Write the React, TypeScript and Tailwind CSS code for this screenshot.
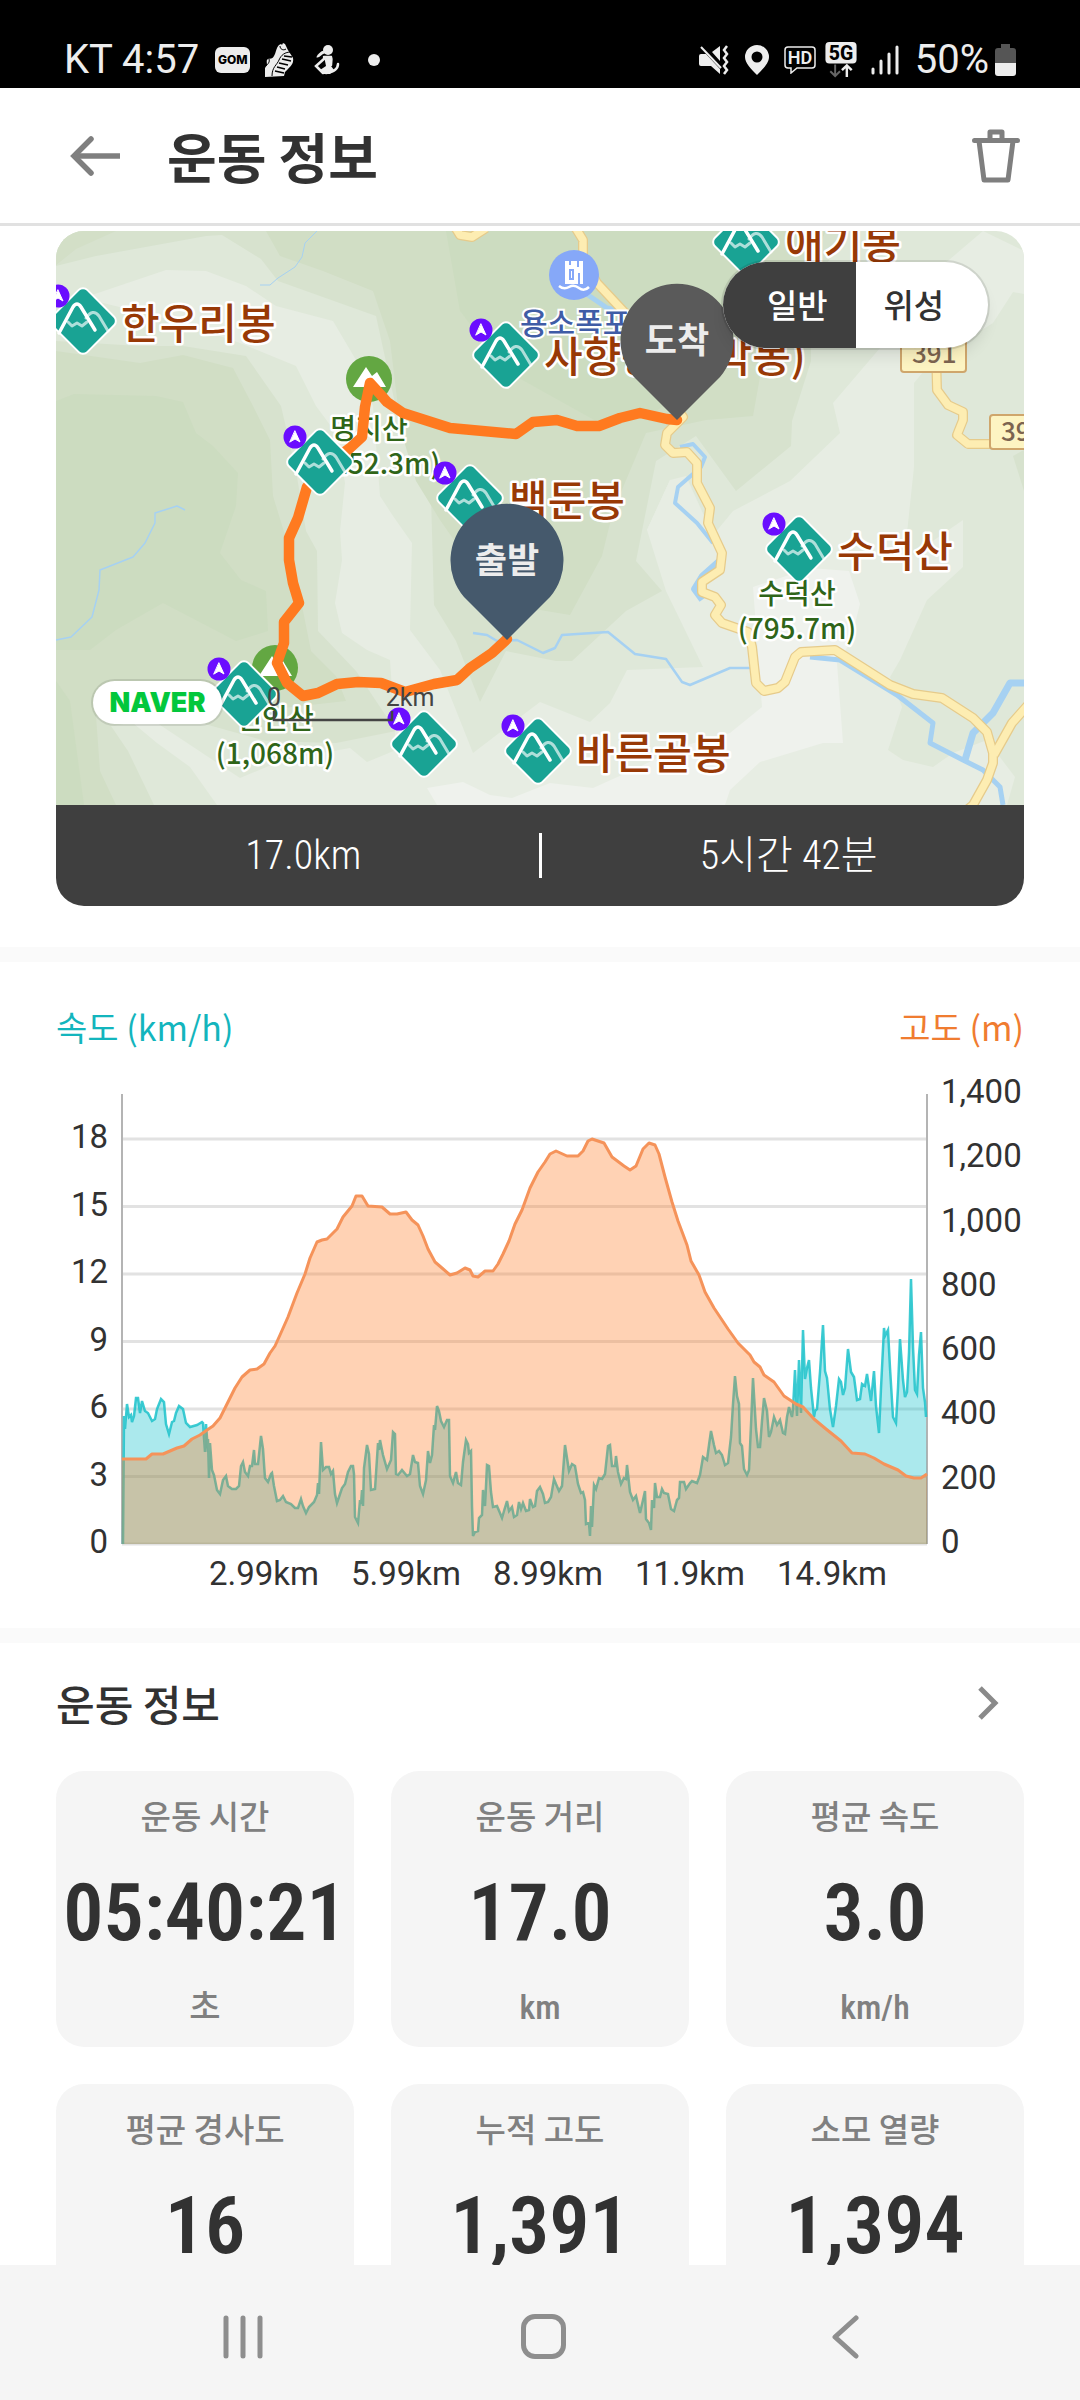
import type { ReactNode } from "react";

type Point = [number, number];

const KR = "font-['Noto_Sans_CJK_KR',sans-serif]";
const ROBOTO = "font-['Roboto','Noto_Sans_CJK_KR',sans-serif]";
const NARROW = "font-['Roboto_Condensed','Liberation_Sans_Narrow','Roboto','Noto_Sans_CJK_KR',sans-serif]";

const stats = [
    { label: "운동 시간", value: "05:40:21", unit: "초" },
    { label: "운동 거리", value: "17.0", unit: "km" },
    { label: "평균 속도", value: "3.0", unit: "km/h" },
    { label: "평균 경사도", value: "16" },
    { label: "누적 고도", value: "1,391" },
    { label: "소모 열량", value: "1,394" },
];

const peaks: { at: Point; name?: string; nameAt?: Point }[] = [
    { at: [27, 90], name: "한우리봉", nameAt: [65, 108] },
    { at: [264, 231] },
    { at: [450, 124], name: "사향봉(소막봉)", nameAt: [488, 141] },
    { at: [414, 267], name: "백둔봉", nameAt: [453, 285] },
    { at: [690, 11], name: "애기봉", nameAt: [729, 28] },
    { at: [743, 318], name: "수덕산", nameAt: [781, 336] },
    { at: [188, 463] },
    { at: [368, 513] },
    { at: [482, 520], name: "바른골봉", nameAt: [520, 538] },
];

const summits: { at: Point; name: string; height: string }[] = [
    { at: [313, 208], name: "명지산", height: "(1,252.3m)" },
    { at: [741, 373], name: "수덕산", height: "(795.7m)" },
    { at: [219, 498], name: "연인산", height: "(1,068m)" },
];

const roads = [
    "M519,-4 L527,9 L527,26 L541,52 L571,84 L600,150 L627,186 L611,202 L609,214 L617,222 L631,221 L641,232 L641,252 L654,277 L652,292 L666,322 L664,339 L646,351 L646,361 L659,366 L665,374 L659,384 L666,392 L692,401 L696,416 L700,452 L708,460 L722,457 L729,451 L739,426 L745,421 L779,419 L834,454 L857,463 L886,467 L917,487 L931,501 L937,522 L937,532 L931,549 L917,574 L900,588",
    "M972,474 L956,492 L938,524",
    "M880,120 L881,159 L892,174 L907,181 L907,189 L901,204 L912,213 L940,213",
    "M399,-4 L404,4 L416,6 L430,-3",
];

const rivers = [
    { d: "M261,0 L249,12 L246,26 L239,36 L222,47 L214,54 L204,54", w: 1 },
    { d: "M129,279 L121,275 L99,282 L99,292 L89,312 L77,326 L44,339 L43,359 L36,386 L15,406 L0,409", w: 1.5 },
    { d: "M528,20 L532,64 L551,77 L575,82", w: 5 },
    { d: "M624,216 L637,213 L649,226 L645,236 L622,256 L619,272 L641,292 L657,312", w: 4 },
    { d: "M664,329 L646,345 L638,358 L646,369", w: 6 },
    { d: "M417,402 L431,404 L441,410 L461,409 L487,422 L499,417 L506,404 L552,401 L579,423 L610,428 L626,451 L634,454 L674,437 L694,437", w: 2.5 },
    { d: "M754,426 L784,429 L841,464 L877,492 L874,512 L907,529 L927,539 L944,556 L947,574", w: 5 },
    { d: "M968,452 L954,452 L937,482 L917,502 L909,529", w: 7 },
];

const terrain = [
    // light valleys
    { fill: "#e7ede3", d: "M27,67 L110,39 L150,40 L190,55 L220,75 L277,90 L300,129 L317,175 L324,265 L337,285 L356,312 L354,399 L384,439 L417,522 L484,471 L534,491 L554,472 L571,439 L647,436 L610,360 L591,299 L614,249 L644,320 L677,280 L734,250 L784,202 L777,172 L830,110 L880,40 L927,0 L968,20 L968,63 L957,61 L937,92 L877,129 L858,152 L858,236 L848,330 L907,289 L907,336 L871,369 L844,429 L834,446 L846,476 L832,519 L847,529 L877,536 L897,522 L931,509 L959,546 L951,574 L161,574 L134,536 L101,512 L77,492 L92,486 L184,547 L227,529 L294,517 L311,531 L340,519 L334,429 L311,419 L286,402 L279,372 L286,329 L284,300 L289,252 L280,202 L260,175 L240,135 L184,112 L120,90 Z" },
    { fill: "#d7e2ce", d: "M0,35 L40,25 L150,5 L166,4 L205,28 L222,50 L250,60 L320,85 L345,200 L375,265 L378,374 L400,410 L424,471 L450,420 L500,430 L516,430 L570,380 L606,360 L580,330 L600,230 L640,205 L680,260 L735,215 L736,190 L755,130 L755,60 L790,0 L0,0 Z" },
    { fill: "#d3dfc7", d: "M0,0 L60,0 L20,18 L0,34 Z" },
    { fill: "#d1dec5", d: "M210,0 L224,25 L267,40 L317,60 L334,110 L345,200 L360,250 L384,289 L407,322 L440,390 L484,379 L514,384 L546,325 L557,280 L590,202 L650,189 L697,185 L705,140 L744,100 L744,56 L770,0 Z" },
    { fill: "#ccdcc0", d: "M390,0 L404,80 L450,140 L540,190 L600,180 L690,120 L712,60 L700,0 Z" },
    { fill: "#d7e2ce", d: "M0,110 L84,115 L127,115 L190,125 L225,175 L240,240 L250,300 L261,320 L262,400 L300,440 L340,500 L280,512 L210,510 L120,485 L55,495 L72,520 L98,574 L0,574 Z" },
    { fill: "#d1dec5", d: "M0,120 L84,132 L127,124 L177,137 L197,175 L214,209 L217,265 L237,330 L255,420 L280,445 L290,470 L200,480 L90,465 L40,485 L44,540 L60,574 L0,574 Z" },
    { fill: "#ccdcc0", d: "M0,170 L18,163 L100,165 L127,171 L140,202 L157,215 L182,242 L180,275 L164,322 L185,349 L210,360 L212,400 L180,410 L107,372 L60,399 L34,419 L0,419 Z" },
    { fill: "#ccdcc0", d: "M0,450 L14,470 L28,574 L0,574 Z" },
    // plains
    { fill: "#eff2ed", d: "M697,356 L754,337 L793,340 L804,373 L794,412 L781,432 L787,512 L767,512 L704,531 L674,559 L669,574 L381,574 L371,557 L407,551 L434,564 L456,567 L494,552 L537,557 L577,539 L624,516 L674,502 L706,476 Z" },
    { fill: "#e7ede3", d: "M591,299 L614,249 L630,245 L655,300 L660,330 L640,350 Z" },
    { fill: "#d7e2ce", d: "M957,225 L968,219 L968,260 Z" },
];

const track =
    "M451,408 L436,422 L414,437 L401,449 L378,453 L349,461 L325,452 L302,451 L281,453 L262,462 L247,465 L231,452 L221,432 L228,412 L228,391 L243,372 L237,352 L233,329 L233,307 L242,287 L251,256 L270,235 L294,217 L306,206 L309,176 L314,152 L324,163 L331,171 L347,182 L394,197 L460,203 L477,191 L501,189 L521,195 L543,195 L564,187 L584,182 L611,188 L621,189";

const altitude =
    "66,395 90,395 96,390 107,390 121,384 128,382 136,375 144,371 151,366 157,362 164,354 171,340 179,324 186,313 194,306 201,305 208,300 214,289 219,282 224,271 232,253 241,229 249,210 254,194 261,178 266,176 271,175 281,165 287,153 296,142 300,132 306,132 312,142 326,143 334,150 341,150 350,148 356,156 362,161 367,172 372,185 379,198 386,204 394,211 401,209 409,204 414,206 417,212 422,213 429,207 437,207 442,200 447,190 453,177 459,160 466,146 474,124 482,108 489,98 494,90 500,87 511,92 522,92 527,87 532,77 536,75 548,79 556,93 568,102 574,106 580,102 587,85 593,79 599,81 603,90 609,113 616,138 622,157 631,181 635,197 643,211 649,228 658,244 672,265 682,279 694,291 698,298 704,303 708,311 718,318 728,332 740,340 747,343 758,355 770,365 785,377 796,389 809,390 818,394 828,400 842,406 850,412 858,414 865,414 871,410";

const speed =
    "67,480 68,352 69,365 71,340 73,353 75,351 76,358 78,352 80,334 82,334 84,349 86,337 89,347 92,349 96,357 99,355 101,345 105,335 108,338 110,360 113,370 116,358 118,357 120,349 123,342 127,345 130,359 134,363 141,361 146,358 147,359 149,388 150,360 152,388 152,375 153,414 154,379 156,406 158,411 161,426 164,430 167,416 170,412 172,422 176,425 180,425 183,422 185,402 187,398 189,408 192,412 194,402 196,402 198,386 199,400 202,400 205,372 207,385 209,414 212,418 215,410 216,409 218,422 221,437 224,436 227,432 230,438 235,440 239,444 242,444 245,435 247,442 250,449 253,443 258,438 261,431 262,419 263,430 265,378 267,406 270,403 273,403 275,410 277,407 279,430 281,439 284,430 286,424 289,420 292,408 295,402 297,402 298,410 299,453 302,459 304,436 305,440 306,426 307,442 308,404 311,381 313,390 315,426 319,425 322,379 323,386 324,376 327,391 331,405 335,396 337,368 339,370 340,410 342,411 346,406 351,412 354,410 357,391 359,398 362,399 364,422 367,430 370,416 372,387 374,399 376,391 378,361 379,366 381,342 383,347 385,357 388,363 391,356 393,356 394,412 397,419 400,408 402,419 405,421 407,398 410,376 412,380 413,389 415,387 416,442 417,472 419,468 422,467 423,454 426,451 427,426 429,442 430,422 431,401 433,402 435,428 437,443 441,442 444,449 446,454 448,447 451,437 453,447 456,443 458,453 461,451 463,438 465,445 467,439 470,447 473,446 474,435 477,443 479,442 481,427 484,423 487,430 489,439 492,438 495,433 498,415 500,420 503,427 506,422 509,381 513,407 516,400 519,402 522,420 525,429 527,428 529,436 530,460 533,459 534,472 535,442 536,463 538,421 540,425 543,414 546,415 549,410 552,382 554,381 556,402 559,402 560,392 562,408 565,420 568,414 570,415 571,401 574,428 577,436 580,432 584,449 587,436 589,427 590,455 593,459 595,466 596,436 598,444 599,419 601,433 604,433 606,425 608,429 612,430 615,445 618,447 621,436 623,434 624,418 628,418 630,425 634,419 636,417 641,419 644,411 647,393 651,396 653,381 655,367 658,381 660,389 663,387 666,391 669,401 672,399 675,373 677,340 679,312 681,332 683,340 684,379 686,382 688,405 691,411 693,406 695,361 697,314 700,365 702,383 704,383 706,357 708,334 711,347 713,373 715,368 718,353 721,361 724,356 727,369 729,370 731,353 733,343 736,353 737,345 739,306 741,352 743,296 745,349 747,266 749,315 751,304 753,296 755,324 758,353 759,347 761,345 764,308 767,261 769,307 771,314 774,345 777,363 780,342 783,315 785,318 787,331 789,324 792,285 795,308 798,313 801,336 804,335 806,320 809,322 811,310 815,337 818,307 820,342 823,369 825,324 828,264 829,272 832,266 834,304 837,353 840,359 842,324 844,275 847,316 849,333 851,328 853,289 855,215 857,283 859,326 861,330 863,291 865,268 867,324 869,338 870,353";

function StatusBar() {
    return (
        <div className={`${ROBOTO} flex h-[88px] shrink-0 items-center justify-between bg-black pt-8 pr-16 pl-16 text-[40px] leading-none text-[#ededed]`}>
            <div className="flex items-center">
                <span>KT 4:57</span>
                <span className="ml-4 flex h-[26px] w-[35px] items-center justify-center rounded-md bg-[#ededed] font-['Inter'] text-[12px] font-extrabold text-black">
                    GOM
                </span>
                {/* running shoe */}
                <svg className="ml-[14px] h-9 w-[30px]" viewBox="0 0 30 36" fill="none">
                    <path d="M1 35V26l2-3c0-3-1-5 1-6s4 1 6-3c2-3 2-8 5-11l2-1 1 1 1-2 2 1 1 2c2 5 5 8 7 12 1 5-2 8-5 11l-3 3-1 4z" fill="#ededed" />
                    <path d="M8 34C8 25 13 23 15 18s6-8 12-8" stroke="#000" strokeWidth="1" />
                    <path d="M11 29l9 2M13 25l8 2M15 21l9 2M18 17l9 2M20 14l8 1" stroke="#000" strokeWidth="1.5" />
                    <path d="M5 17c1 3-1 5-3 7M16 4c0 3 3 5 6 3" stroke="#000" strokeWidth="1" />
                </svg>
                {/* person stretching */}
                <svg className="ml-5 h-[30px] w-[26px]" viewBox="0 0 26 30" fill="none">
                    <circle cx="14" cy="5" r="5" fill="#ededed" />
                    <path d="M10 7C6 8 5 12 3 11" stroke="#ededed" strokeWidth="3" />
                    <path d="M10 12h7c1 2 0 5 0 8M11 13L2 21l7 7M24 19c0 5-5 8-12 9" stroke="#ededed" strokeWidth="2.5" strokeLinecap="round" />
                    <path d="M10 11h7v10l3 4-4 4H9l-3-4 6-4z" fill="#ededed" />
                </svg>
                <span className="ml-7 size-3 rounded-full bg-[#ededed]" />
            </div>
            <div className="flex items-center">
                {/* muted with vibration */}
                <svg className="h-[30px] w-[30px]" viewBox="0 0 30 30" fill="none">
                    <path d="M0 11q0-2 2-2h5l14 15v5l-9-8H2q-2 0-2-2zM13 7l8-6v15z" fill="#ededed" />
                    <path d="M2 2l20 21" stroke="#ededed" strokeWidth="2" />
                    <path d="M28 1l-3 4 3 4-3 4 3 4-3 4 3 4-3 4" stroke="#ededed" strokeWidth="2.5" />
                </svg>
                <svg className="ml-4 h-[30px] w-6" viewBox="0 0 24 30">
                    <path fillRule="evenodd" d="M12 0a12 12 0 0 1 12 12c0 6-6 12-12 18C6 24 0 18 0 12A12 12 0 0 1 12 0zm0 6.500a5.500 5.500 0 1 0 0 11 5.500 5.500 0 0 0 0-11z" fill="#ededed" />
                </svg>
                <svg className="ml-[15px] h-7 w-8" viewBox="0 0 32 28">
                    <path d="M4 1h24q3 0 3 3v15q0 3-3 3H13l-6 5v-5H4q-3 0-3-3V4q0-3 3-3z" fill="none" stroke="#ededed" strokeWidth="1.500" />
                    <text x="16" y="18" textAnchor="middle" fontSize="18" fontWeight="600" fill="#ededed">HD</text>
                </svg>
                <svg className="ml-[9px] h-9 w-8" viewBox="0 0 32 37">
                    <rect width="32" height="22" rx="4" fill="#ededed" />
                    <text x="16" y="18" textAnchor="middle" fontSize="20" fontWeight="800" fill="#000">5G</text>
                    <path d="M10 23v12M5 30l5 5 5-5" fill="none" stroke="#666" strokeWidth="2" />
                    <path d="M22 36V24M17 29l5-5 5 5" fill="none" stroke="#ededed" strokeWidth="2.500" />
                </svg>
                <svg className="ml-[14px] h-[30px] w-7" viewBox="0 0 28 30" stroke="#ededed" strokeWidth="3" strokeLinecap="round">
                    <path d="M2 24v4M10 16v12M18 9v19M26 2v26" />
                </svg>
                <span className="ml-4">50%</span>
                <svg className="ml-[6px] h-8 w-[21px]" viewBox="0 0 21 32">
                    <path d="M6 0h9v4h3q3 0 3 3v12H0V7q0-3 3-3h3z" fill="#555" />
                    <path d="M0 19h21v10q0 3-3 3H3q-3 0-3-3z" fill="#ededed" />
                </svg>
            </div>
        </div>
    );
}

function Header() {
    return (
        <header className="flex h-[138px] shrink-0 items-center border-b-[3px] border-[#e1e1e1] bg-white pr-[60px] pl-[70px]">
            <button type="button" aria-label="뒤로">
                <svg className="h-10 w-[51px]" viewBox="0 0 51 40" fill="none" stroke="#7f7f7f" strokeWidth="5.500" strokeLinecap="round">
                    <path d="M21 3L4 20l17 17" />
                    <path d="M4 20h46" strokeLinecap="butt" />
                </svg>
            </button>
            <h1 className="ml-[46px] flex-1 text-[54px] leading-none font-bold">운동 정보</h1>
            <button type="button" aria-label="삭제">
                <svg className="h-[54px] w-12" viewBox="0 0 48 54" fill="none" stroke="#7f7f7f" strokeWidth="5" strokeLinecap="round" strokeLinejoin="round">
                    <path d="M2.500 11.500h43M18 11V3h12v8M7 12l5 39h24l5-39" />
                </svg>
            </button>
        </header>
    );
}

function PeakMarker({ at }: { at: Point }) {
    return (
        <g transform={`translate(${at[0]} ${at[1]})`} fill="none" strokeLinejoin="round" strokeLinecap="round">
            <rect x="-25" y="-25" width="50" height="50" rx="6" transform="rotate(45)" fill="#19a394" stroke="#fff" strokeWidth="2" />
            <path d="M-15,1 L-11,5 L-6,2 L-1,5 L4,1 M3,-3 Q10,-13 16,-5 L25,10" stroke="#fff" strokeOpacity=".65" strokeWidth="3" />
            <path d="M-24,12 L-10,-14 Q-6,-20 -2,-14 L12,9" stroke="#fff" strokeWidth="3.500" />
            <g transform="translate(-25 -25)">
                <circle r="11.500" fill="#6a0dff" />
                <path d="M0,-6 L5,5 L0,2 L-5,5 Z" fill="#fff" stroke="#fff" />
            </g>
        </g>
    );
}

function SummitBadge({ at }: { at: Point }) {
    return (
        <g transform={`translate(${at[0]} ${at[1]})`}>
            <circle r="23" fill="#63a742" />
            <path d="M-16,8 L-3,-12 L3,-3 L8,-7 L17,8 Z" fill="#fff" />
        </g>
    );
}

function Pin({ at, color, label }: { at: Point; color: string; label: string }) {
    return (
        <g transform={`translate(${at[0]} ${at[1]})`}>
            <path d="M0,80 L-43,37 A56.500,56.500 0 1 1 43,37 Z" fill={color} />
            <text y="13" textAnchor="middle" fontSize="35" fontWeight="700" fill="#ececec">{label}</text>
        </g>
    );
}

function RouteMap() {
    return (
        <div className="relative h-[574px] bg-[#dfe8d9]">
            <svg className={`${KR} size-full`} viewBox="0 0 968 574" preserveAspectRatio="xMidYMid slice">
                {terrain.map((t, i) => (
                    <path key={i} d={t.d} fill={t.fill} />
                ))}
                {rivers.map((r) => (
                    <path key={r.d} d={r.d} fill="none" stroke="#a6d1f2" strokeWidth={r.w} strokeLinejoin="round" />
                ))}
                <g fill="none" strokeLinejoin="round">
                    {roads.map((d) => (
                        <path key={d} d={d} stroke="#e6cb8b" strokeWidth="10" />
                    ))}
                    {roads.map((d) => (
                        <path key={d} d={d} stroke="#fdedb2" strokeWidth="7.500" />
                    ))}
                </g>
                <g fill="#fdf4c2" stroke="#cfa66c" strokeWidth="2">
                    <rect x="845" y="107" width="65" height="34" rx="3" />
                    <rect x="934" y="184" width="65" height="34" rx="3" />
                </g>
                <g fill="#7c6450" fontSize="26" fontWeight="500">
                    <text x="856" y="132">391</text>
                    <text x="945" y="210">391</text>
                </g>

                <SummitBadge at={[313, 148]} />
                <SummitBadge at={[219, 437]} />
                {/* waterfall */}
                <circle cx="518" cy="44" r="25" fill="#86a8f8" />
                <path d="M509,30h18v23h-18z" fill="#fff" />
                <path d="M514,30v4M522,30v6M514,39v9h3v-9zM523,42v11" fill="none" stroke="#86a8f8" strokeWidth="2" />
                <path d="M503,55q5,4 10,1t10,1t10,-1" fill="none" stroke="#fff" strokeWidth="2.500" />
                <text x="464" y="103" fontSize="30" fontWeight="500" fill="#3f5ca6" stroke="#fff" strokeWidth="4" paintOrder="stroke">용소폭포</text>

                <g fill="#2f6519" stroke="#fff" strokeWidth="5" strokeLinejoin="round" fontSize="28" fontWeight="500" textAnchor="middle" paintOrder="stroke">
                    {summits.map((s) => (
                        <text key={s.height} x={s.at[0]} y={s.at[1]}>
                            <tspan>{s.name}</tspan>
                            <tspan x={s.at[0]} dy="35">{s.height}</tspan>
                        </text>
                    ))}
                </g>

                <path d={track} fill="none" stroke="#ff7a20" strokeWidth="10.500" strokeLinejoin="round" strokeLinecap="round" />

                <g fill="#983906" stroke="#fff" strokeWidth="5" strokeLinejoin="round" fontSize="42" fontWeight="500" paintOrder="stroke">
                    {peaks.map((p) => p.nameAt && (
                        <text key={p.name} x={p.nameAt[0]} y={p.nameAt[1]}>{p.name}</text>
                    ))}
                </g>
                {peaks.map((p) => (
                    <PeakMarker key={p.at[0]} at={p.at} />
                ))}

                {/* scale */}
                <path d="M218,480v9h118v-9" fill="none" stroke="#444" strokeWidth="2.500" />
                <g className={ROBOTO} fill="#444" fontSize="25" textAnchor="middle">
                    <text x="218" y="475">0</text>
                    <text x="354" y="475">2km</text>
                </g>

                <Pin at={[451, 329]} color="#45596c" label="출발" />
                <Pin at={[621, 109]} color="#5a5a5a" label="도착" />
            </svg>

            <div className="absolute bottom-[81px] left-[37px] flex h-[43px] w-[129px] items-center justify-center rounded-full bg-white font-['Inter'] text-[27px] leading-none font-black text-[#03c73c] ring-2 ring-black/10">
                NAVER
            </div>
            <div className="absolute top-[31px] right-9 flex h-[86px] w-[265px] overflow-hidden rounded-full bg-white text-[33px] font-medium shadow-lg ring-2 ring-black/10">
                <button type="button" aria-pressed="true" className="flex-1 bg-[#3f3f3f] pl-4 text-white">일반</button>
                <button type="button" aria-pressed="false" className="flex-1 pr-4">위성</button>
            </div>
        </div>
    );
}

function SpeedChart() {
    return (
        <svg className={`${ROBOTO} mt-[15px] w-full`} viewBox="0 0 968 540" role="img" aria-label="속도와 고도">
            <g stroke="#e2e2e2" strokeWidth="3">
                {[0, 1, 2, 3, 4, 5, 6].map((i) => (
                    <line key={i} x1="66" x2="871" y1={480 - i * 67.5} y2={480 - i * 67.5} />
                ))}
            </g>
            <path d="M66,30V480M871,30V480" stroke="#b4b4b4" strokeWidth="2" />
            <polygon points={`66,480 ${speed} 871,480`} fill="#00bdc7" fillOpacity=".33" />
            <polyline points={speed} fill="none" stroke="#1cc2ca" strokeOpacity=".85" strokeWidth="2.500" />
            <polygon points={`66,480 ${altitude} 871,480`} fill="#ff7b22" fillOpacity=".34" />
            <polyline points={altitude} fill="none" stroke="#f5935a" strokeWidth="3" strokeLinejoin="round" />
            <g fill="#323232" fontSize="33">
                {[0, 3, 6, 9, 12, 15, 18].map((v) => (
                    <text key={v} x="52" y={489 - v * 22.5} textAnchor="end">{v}</text>
                ))}
                {[0, 200, 400, 600, 800, 1000, 1200, 1400].map((v) => (
                    <text key={v} x="885" y={489 - (v * 450) / 1400}>{v.toLocaleString("en-US")}</text>
                ))}
                {["2.99km", "5.99km", "8.99km", "11.9km", "14.9km"].map((v, i) => (
                    <text key={v} x={208 + i * 142} y="521" textAnchor="middle">{v}</text>
                ))}
            </g>
        </svg>
    );
}

function StatCard({ label, value, unit }: { label: string; value: string; unit?: ReactNode }) {
    return (
        <div className="flex h-[276px] flex-col items-center rounded-[28px] bg-[#f5f5f5] pt-[22px]">
            <dt className="text-[33px] leading-[44px] font-medium text-[#808080]">{label}</dt>
            <dd className={`${NARROW} mt-7 text-[80px] leading-[96px] font-semibold`}>{value}</dd>
            {unit && <dd className={`${NARROW} mt-6 text-[34px] leading-[44px] font-medium text-[#808080]`}>{unit}</dd>}
        </div>
    );
}

function NavBar() {
    return (
        <nav className="grid h-[135px] shrink-0 grid-cols-3 place-items-center bg-[#f5f5f5] pt-2 pr-[84px] pl-[92px]">
            <button type="button" aria-label="최근 앱">
                <svg className="size-11" viewBox="0 0 44 44" stroke="#8e8e8e" strokeWidth="5" strokeLinecap="round">
                    <path d="M5 3v38M22 3v38M39 3v38" />
                </svg>
            </button>
            <button type="button" aria-label="홈" className="size-[45px] rounded-[14px] border-[5px] border-[#8e8e8e]" />
            <button type="button" aria-label="이전">
                <svg className="size-11" viewBox="0 0 44 44" fill="none" stroke="#8e8e8e" strokeWidth="5" strokeLinecap="round" strokeLinejoin="round">
                    <path d="M33 3L12 22l21 19" />
                </svg>
            </button>
        </nav>
    );
}

export default function App() {
    return (
        <div className={`${KR} flex h-screen flex-col bg-white text-[#323232]`}>
            <StatusBar />
            <Header />

            <main className="min-h-0 flex-1 overflow-hidden">
                <section className="px-14 pt-[5px] pb-[41px]">
                    <div className="overflow-hidden rounded-[28px]">
                        <RouteMap />
                        <div className={`${NARROW} flex h-[101px] items-center bg-[#3f3f3f] text-center text-[40px] font-light text-white`}>
                            <span className="flex-1 pl-3">17.0km</span>
                            <span className="h-[45px] w-[3px] bg-white" />
                            <span className="flex-1 pl-3">5시간 42분</span>
                        </div>
                    </div>
                </section>

                <section className="border-t-[15px] border-[#fafafa] px-14 pt-[43px] pb-6">
                    <div className="flex justify-between text-[34px] leading-[44px]">
                        <span className="text-[#13b5bd]">속도 (km/h)</span>
                        <span className="text-[#f07c30]">고도 (m)</span>
                    </div>
                    <SpeedChart />
                </section>

                <section className="border-t-[15px] border-[#fafafa] px-14 pt-9">
                    <div className="flex items-center justify-between pr-6">
                        <h2 className="text-[42px] leading-[48px] font-medium">운동 정보</h2>
                        <button type="button" aria-label="더보기">
                            <svg className="h-9 w-6" viewBox="0 0 24 36" fill="none" stroke="#8a8a8a" strokeWidth="5">
                                <path d="M4 3l15 15L4 33" />
                            </svg>
                        </button>
                    </div>
                    <dl className="mt-11 grid grid-cols-3 gap-[37px]">
                        {stats.map((s) => (
                            <StatCard key={s.label} {...s} />
                        ))}
                    </dl>
                </section>
            </main>

            <NavBar />
        </div>
    );
}
